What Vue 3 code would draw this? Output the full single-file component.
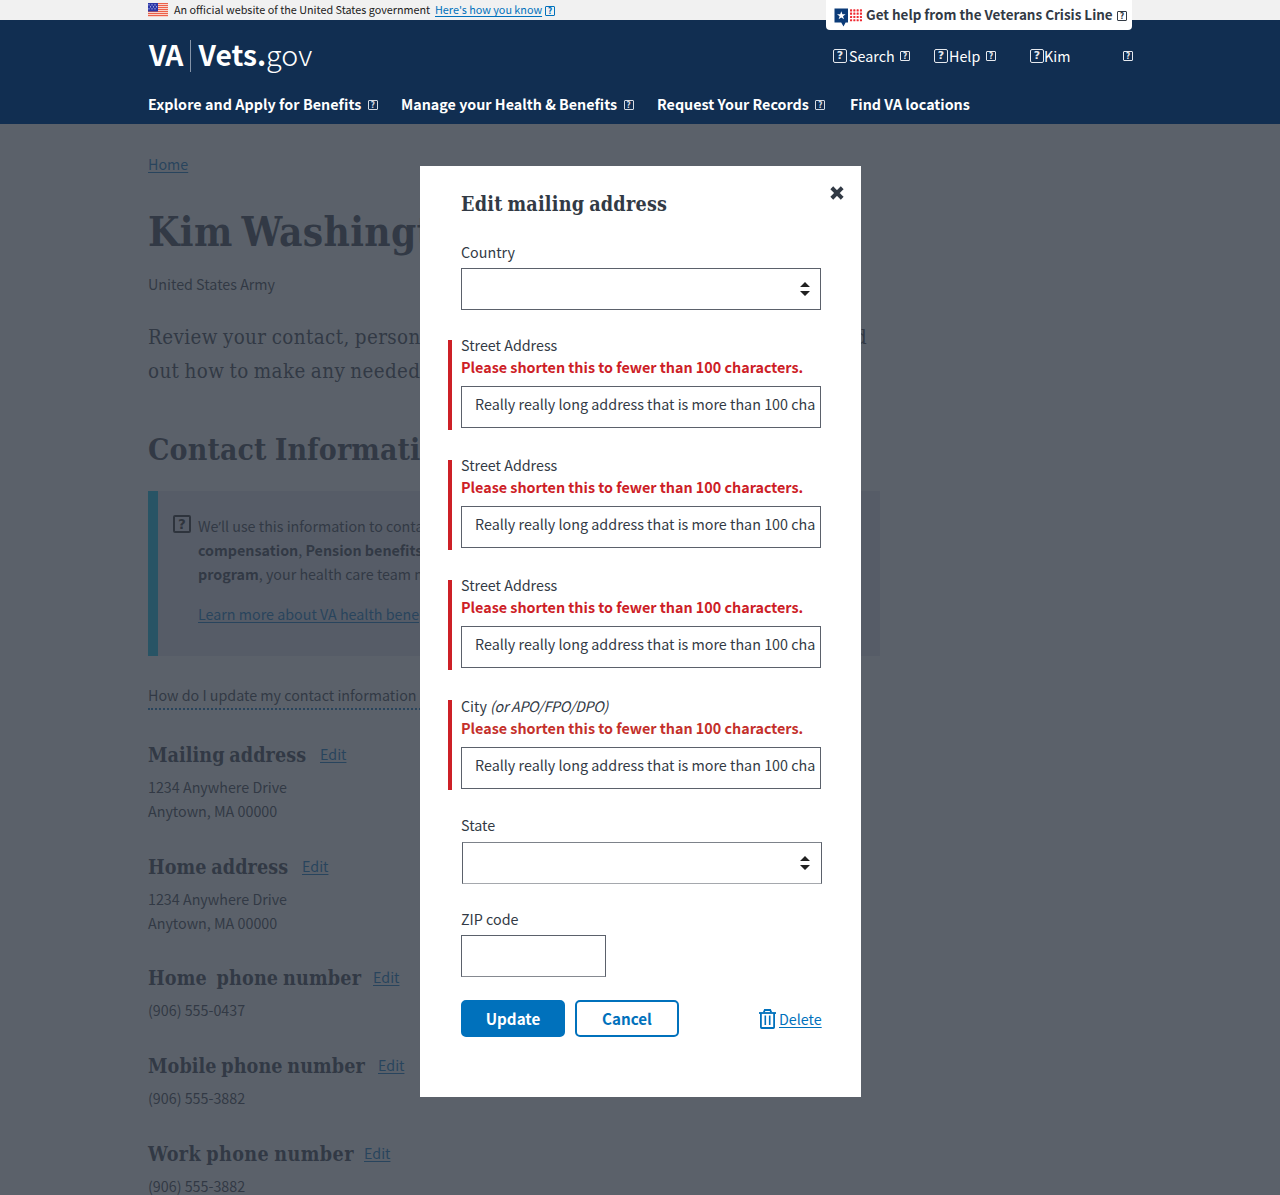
<script setup>
const nav = [
  { label: 'Explore and Apply for Benefits', menu: true, width: 253, spacing: 0.06 },
  { label: 'Manage your Health & Benefits', menu: true, width: 256, spacing: 0.01 },
  { label: 'Request Your Records', menu: true, width: 193, spacing: 0 },
  { label: 'Find VA locations', menu: false, width: 130, spacing: 0 },
]

const contacts = [
  { title: 'Mailing address', width: 172, spacing: 0.06, lines: ['1234 Anywhere Drive', 'Anytown, MA 00000'], height: 112 },
  { title: 'Home address', width: 154, spacing: 0.07, lines: ['1234 Anywhere Drive', 'Anytown, MA 00000'], height: 111 },
  { title: 'Home\u00a0 phone number', width: 225, spacing: 0.16, lines: ['(906) 555-0437'], height: 88 },
  { title: 'Mobile phone number', width: 230, spacing: 0.07, lines: ['(906) 555-3882'], height: 88 },
  { title: 'Work phone number', width: 216, spacing: 0.42, lines: ['(906) 555-3882'], height: 88 },
]

const longText = 'Really really long address that is more than 100 cha'
const errorText = 'Please shorten this to fewer than 100 characters.'
const errorFields = [
  { label: 'Street Address' },
  { label: 'Street Address' },
  { label: 'Street Address' },
  { label: 'City', hint: '(or APO/FPO/DPO)', city: true },
]

const stripes = [0, 2, 4, 6, 8, 10, 12]
const dots = Array.from({ length: 16 }, (_, i) => ({ x: (i % 4) * 3.3, y: Math.floor(i / 4) * 3.3 }))
const flagStars = [[1, 1], [4, 1], [7, 1], [2.5, 3], [5.5, 3], [8.5, 3], [1, 5], [4, 5], [7, 5]]
</script>

<template>
  <div class="page">
    <div class="gov-banner">
      <svg class="flag" width="20" height="14" viewBox="0 0 20 14">
        <rect width="20" height="14" fill="#fbe9e4" />
        <rect v-for="y in stripes" :key="y" x="0" :y="y + 0.1" width="20" height="1.05" fill="#ea5238" />
        <rect width="10" height="8.5" fill="#2a36a8" />
        <circle v-for="(s, i) in flagStars" :key="i" :cx="s[0]" :cy="s[1] + 0.8" r="0.6" fill="#dfe3ff" />
      </svg>
      <span class="gov-text">An official website of the United States government</span>
      <a class="gov-link">Here's how you know</a>
      <span class="box small blue">?</span>
    </div>

    <header class="header">
      <div class="masthead">
        <div class="logo">
          <b class="va">VA</b><i class="divider"></i><b class="vets">Vets.</b><span class="gov">gov</span>
        </div>
        <div class="utility">
          <div class="util search"><span class="box big">?</span><span>Search</span><span class="box small">?</span></div>
          <div class="util help"><span class="box big">?</span><span>Help</span><span class="box small">?</span></div>
          <div class="util user"><span class="box big">?</span><span>Kim</span><span class="box small">?</span></div>
        </div>
      </div>
      <nav class="nav">
        <div v-for="n in nav" :key="n.label" class="nav-item" :style="{ width: n.width + 'px' }">
          <span :style="{ letterSpacing: n.spacing + 'px' }">{{ n.label }}</span><span v-if="n.menu" class="box small">?</span>
        </div>
      </nav>
    </header>

    <div class="crisis">
      <svg width="29" height="19" viewBox="0 0 29 19">
        <path d="M0.5 0.5H14V14.6H11.6L9.5 18.4L7.2 14.6H0.5Z" fill="#0b3b78" />
        <path d="M7.3 3.2L8.4 6.3H11.6L9 8.2L10 11.3L7.3 9.4L4.6 11.3L5.6 8.2L3 6.3H6.2Z" fill="#fff" />
        <rect v-for="(d, i) in dots" :key="i" :x="16 + d.x" :y="1.3 + d.y" width="2.1" height="2.1" rx="0.5" fill="#ee2b33" />
      </svg>
      <b>Get help from the Veterans Crisis Line</b>
      <span class="box small dark">?</span>
    </div>

    <main class="main">
      <div class="crumb"><a>Home</a></div>
      <h1>Kim Washington</h1>
      <p class="branch">United States Army</p>
      <p class="lead"><span>Review your contact, person</span><span>d</span></p>
      <p class="lead">out how to make any needed</p>
      <h2>Contact Information</h2>
      <section class="notice">
        <span class="box info">?</span>
        <div class="notice-text">
          <p>We<span class="apos">’</span>ll use this information to conta</p>
          <p><b>compensation</b>, <b>Pension benefits</b></p>
          <p><b>program</b>, your health care team m</p>
          <p class="learn"><a>Learn more about VA health bene</a></p>
        </div>
      </section>
      <div class="how"><span>How do I update my contact information</span></div>
      <section v-for="c in contacts" :key="c.title" :style="{ height: c.height + 'px' }">
        <div class="contact-head">
          <h3 :style="{ width: c.width + 'px', letterSpacing: c.spacing + 'px' }">{{ c.title }}</h3>
          <a>Edit</a>
        </div>
        <p v-for="l in c.lines" :key="l">{{ l }}</p>
      </section>
    </main>

    <div class="overlay">
      <div class="modal" role="dialog">
        <svg class="close" width="14" height="14" viewBox="0 0 14 14">
          <path d="M3.2 3.2L10.8 10.8M10.8 3.2L3.2 10.8" stroke="#323a45" stroke-width="4" stroke-linecap="square" />
        </svg>
        <h4>Edit mailing address</h4>
        <label class="country-label">Country</label>
        <div class="select">
          <svg width="10" height="14" viewBox="0 0 10 14"><path d="M0 5L5 0L10 5ZM0 9H10L5 14Z" fill="#212121" /></svg>
        </div>
        <div class="errors">
          <div v-for="(f, i) in errorFields" :key="i" class="error-field" :class="{ city: f.city }">
            <label>{{ f.label }} <em v-if="f.hint">{{ f.hint }}</em></label>
            <strong>{{ errorText }}</strong>
            <div class="input">{{ longText }}</div>
          </div>
        </div>
        <label class="state-label">State</label>
        <div class="select state">
          <svg width="10" height="14" viewBox="0 0 10 14"><path d="M0 5L5 0L10 5ZM0 9H10L5 14Z" fill="#212121" /></svg>
        </div>
        <label class="zip-label">ZIP code</label>
        <div class="zip"></div>
        <div class="actions">
          <button class="update">Update</button>
          <button class="cancel">Cancel</button>
          <a class="delete">
            <svg width="17" height="20" viewBox="0 0 17 20" fill="none" stroke="#0071bc">
              <path d="M0 4H17" stroke-width="1.8" />
              <path d="M4.8 3.4L5.8 1H11.2L12.2 3.4" stroke-width="1.8" />
              <path d="M1.9 4V18.2Q1.9 19 2.7 19H14.3Q15.1 19 15.1 18.2V4" stroke-width="1.8" />
              <path d="M6.3 6.5V16M10.7 6.5V16" stroke-width="1.6" />
            </svg>
            <span>Delete</span>
          </a>
        </div>
      </div>
    </div>
  </div>
</template>

<style>
body { background: #fff; }
</style>

<style scoped>
.page {
  position: relative;
  width: 1280px;
  height: 1195px;
  overflow: hidden;
  font: 14.3px/24px "Noto Sans CJK SC", "Open Sans", sans-serif;
  color: #323a45;
  white-space: nowrap;
}
h1, h2, h3, h4, p { margin: 0; }
a { color: #0071bc; text-decoration: underline; text-decoration-thickness: 1px; text-underline-offset: 1.5px; text-decoration-skip-ink: none; }

.box {
  display: inline-flex;
  flex: none;
  align-items: center;
  justify-content: center;
  box-sizing: border-box;
  border: 1px solid currentColor;
  border-radius: 1px;
  font-family: "DejaVu Sans", sans-serif;
  font-weight: 700;
  text-decoration: none;
}
.small { width: 10px; height: 10px; font-family: "DejaVu Sans Condensed", "DejaVu Sans", sans-serif; font-size: 8px; line-height: 9px; }
.big { width: 14px; height: 14px; font-size: 11px; line-height: 12px; border-radius: 2px; }
.info { width: 18px; height: 18px; border-width: 2px; font-size: 13.5px; line-height: 14px; border-radius: 2px; color: #212121; }
.blue { color: #0071bc; margin: 2px 0 0 3px; }
.dark { margin: 2px 0 0 4px; }

.gov-banner {
  display: flex;
  align-items: center;
  height: 20px;
  padding-left: 148px;
  box-sizing: border-box;
  background: #f1f1f1;
  font-size: 10.8px;
  line-height: 19px;
}
.flag { margin-right: 6px; }
.gov-text { width: 261px; height: 20px; color: #212121; }
.gov-link { height: 20px; }

.header { height: 104px; background: #112e51; color: #fff; padding: 0 148px; }
.masthead { display: flex; justify-content: space-between; height: 72px; }
.logo { display: flex; align-items: flex-start; padding-top: 20px; line-height: 28px; font-size: 28.2px; }
.va { width: 42px; padding-left: 1px; box-sizing: border-box; letter-spacing: -0.6px; }
.divider { width: 1px; height: 32px; background: #8594a8; margin-right: 7.5px; }
.vets { width: 67.5px; }
.gov { font-weight: 300; font-size: 28.6px; }
.utility { display: flex; padding-top: 24px; margin-right: -1px; }
.util { display: flex; align-items: center; height: 24px; }
.util .box { color: #e6e9ee; }
.util span:nth-child(2) { line-height: 24px; }
.search { width: 77px; margin-right: 24px; }
.help { width: 62px; margin-right: 34px; }
.user { width: 103px; }
.search .big { margin-right: 2px; }
.help .big { margin-right: 1px; }
.util .small { margin-left: auto; }
.nav { display: flex; font-weight: 700; }
.nav-item { display: flex; align-items: center; height: 24px; box-sizing: border-box; }
.nav-item span:first-child { line-height: 24px; }
.nav-item .box { margin: 2px 0 0 6.5px; color: #d5dbe4; }

.crisis {
  position: absolute;
  top: 0;
  left: 826px;
  width: 306px;
  height: 30px;
  box-sizing: border-box;
  padding-left: 8px;
  display: flex;
  align-items: center;
  background: #fff;
  border-radius: 0 0 4px 4px;
  font-size: 13.44px;
}
.crisis svg { margin: 4px 3px 0 0; }
.crisis b { width: 247px; line-height: 28px; height: 30px; }

.main { padding: 28px 0 0 148px; }
.crumb { height: 24px; }
h1, h2, h3, h4, .lead { font-family: "DejaVu Serif Condensed", "DejaVu Serif", serif; font-stretch: condensed; font-weight: 700; }
h1 { margin-top: 32px; font-size: 40.3px; line-height: 48px; word-spacing: -4px; letter-spacing: 0.3px; }
.branch { margin-top: 16px; }
.lead { display: flex; justify-content: space-between; width: 719px; font-weight: 400; font-size: 20.4px; line-height: 34px; letter-spacing: 0.38px; word-spacing: -1px; }
.branch + .lead { margin-top: 24px; }
h2 { margin-top: 42px; font-size: 30px; line-height: 40px; letter-spacing: 0.1px; word-spacing: -1.5px; }
.notice {
  display: flex;
  width: 732px;
  height: 165px;
  margin-top: 21px;
  box-sizing: border-box;
  border-left: 10px solid #02bfe7;
  background: #e6e4ee;
  padding: 23px 0 0 15px;
}
.notice .info { margin-top: 1px; }
.notice-text { margin-left: 7px; }
.apos { font-family: "Open Sans", sans-serif; line-height: 1; }
.learn { margin-top: 16px; }
.how { margin-top: 27px; height: 59px; }
.how span { display: inline-block; height: 25px; line-height: 24px; border-bottom: 2px dotted #0071bc; padding-right: 20px; }
.contact-head { display: flex; height: 33px; }
.contact-head a { line-height: 23px; }
h3 { font-size: 19.6px; line-height: 27px; word-spacing: -1.5px; }

.overlay { position: absolute; inset: 124px 0 0 0; background: rgba(50, 58, 69, 0.8); }
.modal {
  position: absolute;
  left: 420px;
  top: 42px;
  width: 441px;
  height: 931px;
  box-sizing: border-box;
  padding: 26px 39px 0 41px;
  background: #fff;
}
.modal label { display: block; height: 22px; line-height: 22px; }
.close { position: absolute; left: 410px; top: 20px; }
h4 { font-size: 19.6px; line-height: 26px; letter-spacing: 0.23px; word-spacing: -1.5px; }
.modal .country-label { margin-top: 23px; height: 27px; }
.select { display: flex; align-items: center; justify-content: flex-end; width: 360px; height: 42px; padding-right: 10px; box-sizing: border-box; border: 1px solid #5b616b; }
.errors { display: flex; flex-direction: column; gap: 30px; margin: 30px 0 0 -13px; }
.error-field { display: flow-root; height: 90px; border-left: 4px solid #cd2026; padding-left: 9px; box-sizing: border-box; }
.error-field label { margin-top: -6px; }
.error-field strong { display: block; line-height: 22px; font-size: 14.33px; color: #cd2026; }
.error-field em { letter-spacing: -0.33px; }
.input { width: 360px; height: 42px; margin-top: 8px; box-sizing: border-box; border: 1px solid #5b616b; padding-left: 13px; font-size: 14.33px; line-height: 34px; overflow: hidden; }
.city label { margin-top: -5px; }
.city strong { color: #c4302b; }
.modal .state-label { margin-top: 24px; height: 28px; }
.state { margin-left: 1px; padding-right: 11px; border-top-color: #7d828a; border-bottom-color: #a5a8ad; }
.modal .zip-label { margin-top: 24px; height: 27px; }
.zip { width: 145px; height: 42px; box-sizing: border-box; border: 1px solid #5b616b; border-bottom-color: #858990; }
.actions { display: flex; margin-top: 23px; height: 37px; }
button { width: 104px; height: 37px; padding: 0 0 1px; box-sizing: border-box; border: 2px solid #0071bc; border-radius: 5px; font: 700 15.2px/32px "Noto Sans CJK SC", sans-serif; }
.update { background: #0071bc; color: #fff; margin-right: 10px; }
.cancel { background: #fff; color: #0071bc; }
.delete { display: flex; align-items: center; margin-left: 80px; text-decoration: none; }
.delete svg { margin-right: 3px; }
.delete span { text-decoration: underline; text-decoration-thickness: 1px; text-underline-offset: 1.5px; line-height: 24px; }
</style>
